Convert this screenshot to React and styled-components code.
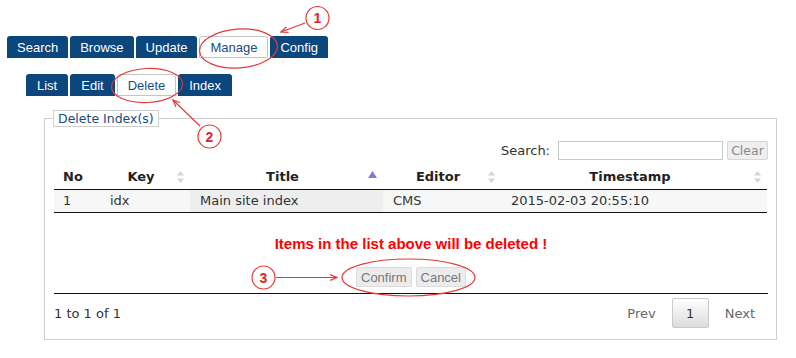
import React from "react";
import styled, { createGlobalStyle } from "styled-components";

const mainTabs = ["Search", "Browse", "Update", "Manage", "Config"];
const subTabs = ["List", "Edit", "Delete", "Index"];

const columns = [
  { key: "no", title: "No", width: 46, sort: null },
  { key: "key", title: "Key", width: 90, sort: "both" },
  { key: "title", title: "Title", width: 193, sort: "asc" },
  { key: "editor", title: "Editor", width: 118, sort: "both" },
  { key: "ts", title: "Timestamp", width: 266, sort: "both" }
];

const rows = [
  { no: "1", key: "idx", title: "Main site index", editor: "CMS", ts: "2015-02-03 20:55:10" }
];

const App = () => {
  return (
    <Page>
      <GlobalStyle />
      <TabBar>
        {mainTabs.map(t => (
          <Tab key={t} active={t === "Manage"}>{t}</Tab>
        ))}
      </TabBar>
      <SubTabBar>
        {subTabs.map(t => (
          <SubTab key={t} active={t === "Delete"}>{t}</SubTab>
        ))}
      </SubTabBar>

      <Panel>
        <Legend>Delete Index(s)</Legend>
        <SearchRow>
          <SearchLabel>Search:</SearchLabel>
          <SearchInput type="text" />
          <ClearButton>Clear</ClearButton>
        </SearchRow>

        <Table>
          <colgroup>
            {columns.map(c => (
              <col key={c.key} style={{ width: c.width }} />
            ))}
          </colgroup>
          <thead>
            <tr>
              {columns.map(c => (
                <Th key={c.key}>
                  {c.title}
                  {c.sort === "both" && (
                    <SortIcon width="7" height="12" viewBox="0 0 7 12">
                      <path d="M3.5 0 L7 4.5 H0 Z" fill="#d4d4d4" />
                      <path d="M3.5 12 L7 7.5 H0 Z" fill="#d4d4d4" />
                    </SortIcon>
                  )}
                  {c.sort === "asc" && (
                    <SortIcon width="9" height="12" viewBox="0 0 9 12">
                      <path d="M4.5 0 L9 7 H0 Z" fill="#7c7cdc" />
                    </SortIcon>
                  )}
                </Th>
              ))}
            </tr>
          </thead>
          <tbody>
            {rows.map(r => (
              <tr key={r.no}>
                {columns.map(c => (
                  <Td key={c.key} sorted={c.sort === "asc"} first={c.key === "no"}>
                    {r[c.key]}
                  </Td>
                ))}
              </tr>
            ))}
          </tbody>
        </Table>

        <Warning>Items in the list above will be deleted !</Warning>
        <Actions>
          <ActionButton>Confirm</ActionButton>
          <ActionButton>Cancel</ActionButton>
        </Actions>

        <Footer>
          <Info>1 to 1 of 1</Info>
          <Pager>
            <PageLink>Prev</PageLink>
            <PageCurrent>1</PageCurrent>
            <PageLink>Next</PageLink>
          </Pager>
        </Footer>
      </Panel>

      <Notes width="796" height="358" viewBox="0 0 796 358">
        <defs>
          <marker id="head" markerWidth="8" markerHeight="8" refX="7" refY="4" orient="auto" markerUnits="userSpaceOnUse">
            <path d="M0 1 L7 4 L0 7" fill="none" stroke="#e53935" strokeWidth="1.2" />
          </marker>
        </defs>
        <g fill="none" stroke="#e53935" strokeWidth="1.2">
          <ellipse cx="238.5" cy="48.5" rx="39" ry="19.5" transform="rotate(-4 238.5 48.5)" />
          <ellipse cx="147" cy="85.5" rx="35.5" ry="17" transform="rotate(-3 147 85.5)" />
          <ellipse cx="408.5" cy="277.5" rx="66.5" ry="18.5" />
          <circle cx="317.5" cy="18" r="11.5" />
          <circle cx="209.5" cy="136.5" r="11.5" />
          <circle cx="263.5" cy="277.5" r="11.5" />
          <line x1="305" y1="23" x2="281" y2="32" markerEnd="url(#head)" />
          <line x1="200" y1="126" x2="173" y2="100" markerEnd="url(#head)" />
          <line x1="276" y1="277.5" x2="337" y2="277.5" markerEnd="url(#head)" />
        </g>
        <g fill="#e02424" fontFamily="'Liberation Sans', Arial, sans-serif" fontWeight="bold" fontSize="14" textAnchor="middle">
          <text x="317.5" y="23">1</text>
          <text x="209.5" y="141.5">2</text>
          <text x="263.5" y="282.5">3</text>
        </g>
      </Notes>
    </Page>
  );
};

export default App;

const GlobalStyle = createGlobalStyle`
  html, body {
    margin: 0;
    padding: 0;
    background: #fff;
  }
  body {
    font-family: "DejaVu Sans", Verdana, sans-serif;
  }
`;

const Page = styled.div`
  position: relative;
  width: 796px;
  height: 358px;
  box-sizing: border-box;
  padding: 36px 0 0 7px;
  overflow: hidden;
`;

const TabBar = styled.div`
  display: flex;
  gap: 2px;
`;

const SubTabBar = styled(TabBar)`
  margin: 16px 0 0 19px;
`;

const Tab = styled.div`
  height: 22px;
  box-sizing: border-box;
  padding: 0 ${p => (p.active ? "10px" : "10px")};
  display: flex;
  align-items: center;
  font-family: "Liberation Sans", Arial, sans-serif;
  font-size: 13px;
  border-radius: 3px 3px 0 0;
  border: ${p => (p.active ? "1px solid #c4c4c4" : "none")};
  background: ${p => (p.active ? "#fff" : "#0b467d")};
  color: ${p => (p.active ? "#1b4c82" : "#fff")};
`;

const SubTab = styled(Tab)`
  padding: 0 ${p => (p.active ? "10px" : "11px")};
`;

const Panel = styled.fieldset`
  margin: 14px 0 0 37px;
  width: 733px;
  min-width: 0;
  box-sizing: border-box;
  padding: 0 8px 11px 9px;
  border: 1px solid #cfcfcf;
`;

const Legend = styled.legend`
  margin-left: -1px;
  padding: 0 4px;
  border: 1px solid #cfcfcf;
  line-height: 15px;
  font-size: 12.5px;
  color: #1b4c82;
`;

const SearchRow = styled.div`
  margin-top: 14px;
  display: flex;
  justify-content: flex-end;
  align-items: center;
  height: 19px;
`;

const SearchLabel = styled.span`
  font-size: 13px;
  color: #333;
  margin-right: 8px;
`;

const SearchInput = styled.input`
  width: 165px;
  height: 19px;
  box-sizing: border-box;
  border: 1px solid #c8c8c8;
  padding: 0 3px;
  margin: 0 4px 0 0;
  outline: none;
`;

const ClearButton = styled.button`
  width: 41px;
  height: 19px;
  box-sizing: border-box;
  padding: 0;
  border: 1px solid #d6d6d6;
  border-radius: 2px;
  background: #efefef;
  color: #8a8a8a;
  font-family: "DejaVu Sans", Verdana, sans-serif;
  font-size: 12.5px;
`;

const Table = styled.table`
  width: 713px;
  table-layout: fixed;
  border-collapse: separate;
  border-spacing: 0;
  font-size: 13px;
`;

const Th = styled.th`
  position: relative;
  padding: 9px 17px 4px 9px;
  line-height: 16px;
  text-align: center;
  font-weight: bold;
  color: #222;
  border-bottom: 1px solid #111;
  white-space: nowrap;
`;

const SortIcon = styled.svg`
  position: absolute;
  right: 6px;
  top: 11px;
`;

const Td = styled.td`
  padding: 3px 10px 3px ${p => (p.first ? "9px" : "10px")};
  line-height: 16px;
  color: #333;
  background: ${p => (p.sorted ? "#eeeeee" : "#f7f7f7")};
  border-bottom: 1px solid #111;
  white-space: nowrap;
`;

const Warning = styled.div`
  margin-top: 23px;
  text-align: center;
  font-family: "Liberation Sans", Arial, sans-serif;
  font-weight: bold;
  font-size: 15px;
  line-height: 16px;
  color: #f00;
`;

const Actions = styled.div`
  margin-top: 15px;
  display: flex;
  justify-content: center;
  gap: 4px;
`;

const ActionButton = styled.button`
  height: 20px;
  box-sizing: border-box;
  padding: 0 4px;
  border: 1px solid #dcdcdc;
  border-radius: 2px;
  background: #ececec;
  color: #777;
  font-family: "Liberation Sans", Arial, sans-serif;
  font-size: 13px;
`;

const Footer = styled.div`
  margin-top: 6px;
  border-top: 1px solid #111;
  padding: 4px 13px 0 0;
  display: flex;
  justify-content: space-between;
  align-items: center;
`;

const Info = styled.span`
  font-size: 13px;
  color: #333;
`;

const Pager = styled.div`
  display: flex;
  align-items: center;
  gap: 16px;
`;

const PageLink = styled.span`
  font-size: 13px;
  color: #666;
`;

const PageCurrent = styled.span`
  width: 37px;
  height: 30px;
  box-sizing: border-box;
  display: flex;
  align-items: center;
  justify-content: center;
  border: 1px solid #cacaca;
  border-radius: 2px;
  background: linear-gradient(#ffffff, #dcdcdc);
  font-size: 13px;
  color: #333;
`;

const Notes = styled.svg`
  position: absolute;
  left: 0;
  top: 0;
  pointer-events: none;
`;
